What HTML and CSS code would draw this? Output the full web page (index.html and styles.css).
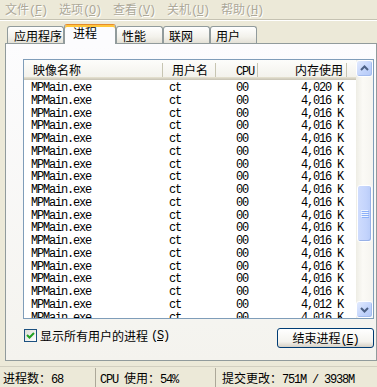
FILE: index.html
```html
<!DOCTYPE html>
<html lang="zh-CN">
<head>
    <meta charset="UTF-8">
    <title>Windows 任务管理器</title>
    <link rel="stylesheet" href="styles.css">
</head>
<body>
    <div class="menubar">
        <span class="menu-item">文件<span class="lat">(<u>F</u>)</span></span>
        <span class="menu-item">选项<span class="lat">(<u>O</u>)</span></span>
        <span class="menu-item">查看<span class="lat">(<u>V</u>)</span></span>
        <span class="menu-item">关机<span class="lat">(<u>U</u>)</span></span>
        <span class="menu-item">帮助<span class="lat">(<u>H</u>)</span></span>
    </div>

    <div class="tabs">
        <div class="tab tab-wide">应用程序</div>
        <div class="tab tab-active">进程</div>
        <div class="tab">性能</div>
        <div class="tab">联网</div>
        <div class="tab">用户</div>
    </div>

    <div class="panel">
        <div class="listbox">
            <div class="list-main">
                <div class="list-header">
                    <div class="col col-name">映像名称</div>
                    <div class="col col-user">用户名</div>
                    <div class="col col-cpu"><span class="lat">CPU</span></div>
                    <div class="col col-mem">内存使用</div>
                    <div class="col col-fill"></div>
                </div>
                <div class="rows">
                    <div class="row"><span class="c-name">MPMain.exe</span><span class="c-user">ct</span><span class="c-cpu">00</span><span class="c-mem">4,020 K</span></div>
                    <div class="row"><span class="c-name">MPMain.exe</span><span class="c-user">ct</span><span class="c-cpu">00</span><span class="c-mem">4,016 K</span></div>
                    <div class="row"><span class="c-name">MPMain.exe</span><span class="c-user">ct</span><span class="c-cpu">00</span><span class="c-mem">4,016 K</span></div>
                    <div class="row"><span class="c-name">MPMain.exe</span><span class="c-user">ct</span><span class="c-cpu">00</span><span class="c-mem">4,016 K</span></div>
                    <div class="row"><span class="c-name">MPMain.exe</span><span class="c-user">ct</span><span class="c-cpu">00</span><span class="c-mem">4,016 K</span></div>
                    <div class="row"><span class="c-name">MPMain.exe</span><span class="c-user">ct</span><span class="c-cpu">00</span><span class="c-mem">4,016 K</span></div>
                    <div class="row"><span class="c-name">MPMain.exe</span><span class="c-user">ct</span><span class="c-cpu">00</span><span class="c-mem">4,016 K</span></div>
                    <div class="row"><span class="c-name">MPMain.exe</span><span class="c-user">ct</span><span class="c-cpu">00</span><span class="c-mem">4,016 K</span></div>
                    <div class="row"><span class="c-name">MPMain.exe</span><span class="c-user">ct</span><span class="c-cpu">00</span><span class="c-mem">4,016 K</span></div>
                    <div class="row"><span class="c-name">MPMain.exe</span><span class="c-user">ct</span><span class="c-cpu">00</span><span class="c-mem">4,016 K</span></div>
                    <div class="row"><span class="c-name">MPMain.exe</span><span class="c-user">ct</span><span class="c-cpu">00</span><span class="c-mem">4,016 K</span></div>
                    <div class="row"><span class="c-name">MPMain.exe</span><span class="c-user">ct</span><span class="c-cpu">00</span><span class="c-mem">4,016 K</span></div>
                    <div class="row"><span class="c-name">MPMain.exe</span><span class="c-user">ct</span><span class="c-cpu">00</span><span class="c-mem">4,016 K</span></div>
                    <div class="row"><span class="c-name">MPMain.exe</span><span class="c-user">ct</span><span class="c-cpu">00</span><span class="c-mem">4,016 K</span></div>
                    <div class="row"><span class="c-name">MPMain.exe</span><span class="c-user">ct</span><span class="c-cpu">00</span><span class="c-mem">4,016 K</span></div>
                    <div class="row"><span class="c-name">MPMain.exe</span><span class="c-user">ct</span><span class="c-cpu">00</span><span class="c-mem">4,016 K</span></div>
                    <div class="row"><span class="c-name">MPMain.exe</span><span class="c-user">ct</span><span class="c-cpu">00</span><span class="c-mem">4,016 K</span></div>
                    <div class="row"><span class="c-name">MPMain.exe</span><span class="c-user">ct</span><span class="c-cpu">00</span><span class="c-mem">4,012 K</span></div>
                    <div class="row"><span class="c-name">MPMain.exe</span><span class="c-user">ct</span><span class="c-cpu">00</span><span class="c-mem">4,016 K</span></div>
                </div>
            </div>
            <div class="scrollbar">
                <div class="sb-btn">
                    <svg width="15" height="15" viewBox="0 0 15 15"><path d="M4 9 L7.5 5.5 L11 9" fill="none" stroke="#4D6185" stroke-width="2"/></svg>
                </div>
                <div class="sb-track">
                    <div class="sb-thumb">
                        <svg width="8" height="8" viewBox="0 0 8 8">
                            <path d="M0 0.5h7M0 2.5h7M0 4.5h7M0 6.5h7" stroke="#EEF4FE"/>
                            <path d="M1 1.5h7M1 3.5h7M1 5.5h7M1 7.5h7" stroke="#8CB0F8"/>
                        </svg>
                    </div>
                </div>
                <div class="sb-btn">
                    <svg width="15" height="15" viewBox="0 0 15 15"><path d="M4 6 L7.5 9.5 L11 6" fill="none" stroke="#4D6185" stroke-width="2"/></svg>
                </div>
            </div>
        </div>

        <div class="panel-footer">
            <label class="check">
                <span class="checkbox">
                    <svg width="11" height="11" viewBox="0 0 11 11"><path d="M2 5 L4.5 7.5 L9 3" fill="none" stroke="#21A121" stroke-width="2"/></svg>
                </span>
                显示所有用户的进程<span class="lat">(<u>S</u>)</span>
            </label>
            <button class="end-btn">结束进程<span class="lat">(<u>E</u>)</span></button>
        </div>
    </div>

    <div class="statusbar">
        <div class="status status-procs">进程数：<span class="lat">68</span></div>
        <div class="status status-cpu"><span class="lat">CPU </span>使用：<span class="lat">54%</span></div>
        <div class="status status-mem">提交更改：<span class="lat">751M / 3938M</span></div>
    </div>
</body>
</html>
```

FILE: styles.css
```css
* {
    margin: 0;
    padding: 0;
    box-sizing: border-box;
}

body {
    width: 377px;
    height: 387px;
    overflow: hidden;
    background: #ECE9D8;
    font-family: "Noto Sans CJK SC", sans-serif;
    font-size: 12px;
    line-height: 14px;
    color: #000;
}

/* latin text in SimSun is half width, 6px per char */
.lat {
    font-family: "Liberation Mono", monospace;
    font-size: 12px;
    letter-spacing: -1.2px;
}

.menubar {
    height: 20px;
    display: flex;
    gap: 12px;
    padding: 2px 0 0 5px;
    border-bottom: 1px solid #C5C2B2;
}

.menu-item {
    width: 42px;
    white-space: nowrap;
    color: #ACA899;
    text-shadow: 1px 1px 0 #fff;
}

.tabs {
    height: 23px;
    display: flex;
    align-items: flex-end;
    padding-left: 7px;
    border-top: 1px solid #fff;
}

.tab {
    width: 47px;
    height: 17px;
    padding: 2px 0 0 5px;
    border: 1px solid #919B9C;
    border-bottom: none;
    border-radius: 3px 3px 0 0;
    background: linear-gradient(#FFFFFF, #F3F2EC 60%, #E3E1D7);
}

.tab-wide {
    width: 57px;
    padding-left: 6px;
}

.tab-active {
    position: relative;
    z-index: 1;
    width: 52px;
    height: 20px;
    margin-bottom: -1px;
    padding: 1px 0 0 8px;
    border-top: 1px solid #E68B2C;
    background: #FCFCFE;
    box-shadow: inset 0 2px 0 #FFC73C;
}

.panel {
    width: 372px;
    height: 318px;
    margin-left: 5px;
    padding: 15px 0 0 17px;
    border: 1px solid #919B9C;
    background: linear-gradient(#FCFCFE, #F4F3EE);
}

.listbox {
    width: 351px;
    height: 260px;
    display: flex;
    border: 1px solid #7F9DB9;
    background: #fff;
}

.list-main {
    flex: 1;
    overflow: hidden;
}

.list-header {
    height: 20px;
    display: grid;
    grid-template-columns: 139px 53px 42px 89px 1fr;
    line-height: 19px;
    background: linear-gradient(#FDFDFB, #F3F2EC 17px, #E2DECD 17px, #E2DECD 18px, #D6D2C2 18px, #D6D2C2 19px, #CBC7B8 19px);
}

.col {
    white-space: nowrap;
    background: linear-gradient(#C7C5B2, #C7C5B2) right 3px / 1px 14px no-repeat;
}

.col-name,
.col-user {
    padding-left: 9px;
}

.col-cpu {
    text-align: right;
    padding-right: 4px;
}

.col-mem {
    text-align: right;
    padding-right: 4px;
}

.col-fill {
    background: none;
}

.rows {
    padding-top: 2px;
}

.row {
    height: 12.75px;
    display: grid;
    grid-template-columns: 139px 53px 42px 89px;
    font-family: "Liberation Mono", monospace;
    font-size: 12px;
    line-height: 12.75px;
    letter-spacing: -1.2px;
    white-space: nowrap;
}

.c-name {
    padding-left: 7px;
}

.c-user {
    padding-left: 6px;
}

.c-cpu {
    text-align: right;
    padding-right: 10px;
}

.c-mem {
    text-align: right;
    padding-right: 4px;
}

.scrollbar {
    width: 17px;
    display: flex;
    flex-direction: column;
    background: linear-gradient(to right, #EEEDE5, #FBFAF6 40%, #F5F4EF);
}

.sb-btn {
    height: 17px;
    display: flex;
    align-items: center;
    justify-content: center;
    border: 1px solid #fff;
    border-radius: 3px;
    background: linear-gradient(135deg, #E3EBFE, #C1D3FB 60%, #B4C8F6);
    box-shadow: inset -1px -1px 0 #A4BCEE;
}

.sb-track {
    flex: 1;
    padding-top: 108px;
}

.sb-thumb {
    height: 57px;
    margin: 0 1px;
    display: flex;
    align-items: center;
    justify-content: center;
    border: 1px solid #fff;
    border-radius: 3px;
    background: linear-gradient(to right, #CFDCFD, #C4D4FC 60%, #B9CCF8);
    box-shadow: inset -1px -1px 0 #98B1E7;
}

.panel-footer {
    width: 351px;
    margin-top: 9px;
    display: flex;
    justify-content: space-between;
    align-items: flex-start;
}

.check {
    display: flex;
    align-items: center;
    gap: 3px;
    height: 13px;
    margin-left: 1px;
    margin-top: 1px;
    white-space: nowrap;
}

.checkbox {
    width: 13px;
    height: 13px;
    display: flex;
    align-items: center;
    justify-content: center;
    border: 1px solid #1C5180;
    background: linear-gradient(135deg, #DCDCD7, #FFFFFF);
}

.end-btn {
    width: 97px;
    height: 20px;
    border: 1px solid #003C74;
    border-radius: 3px;
    background: linear-gradient(#FFFFFF, #F4F3EE 70%, #D6D0C5);
    font-family: "Noto Sans CJK SC", sans-serif;
    font-size: 12px;
    line-height: 17px;
    color: #000;
}

.statusbar {
    height: 21px;
    margin-top: 5px;
    display: flex;
    border-top: 1px solid #D2CFC0;
}

.status {
    margin-top: 1px;
    line-height: 19px;
    white-space: nowrap;
}

.status-procs {
    width: 95px;
    padding-left: 3px;
}

.status-cpu {
    width: 120px;
    padding-left: 4px;
    border-left: 1px solid #ACA899;
}

.status-mem {
    flex: 1;
    padding-left: 6px;
    border-left: 1px solid #ACA899;
}
```
